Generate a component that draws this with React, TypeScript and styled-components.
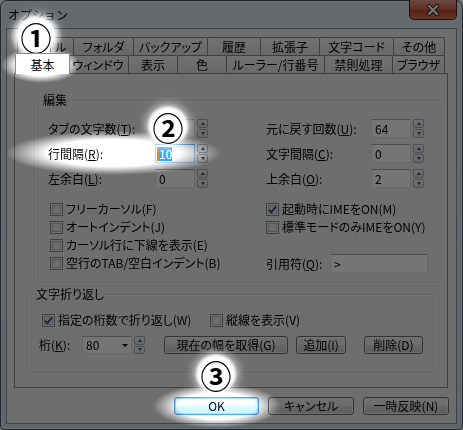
import styled, { createGlobalStyle } from "styled-components";

const GlobalStyle = createGlobalStyle`
  html, body { margin: 0; padding: 0; background: #ffffff; }
  body {
    font-family: "Noto Sans CJK JP", "Noto Sans", sans-serif;
    font-size: 12px;
    line-height: 18px;
    color: #000;
    font-feature-settings: "palt";
  }
  *, *::before, *::after { box-sizing: border-box; }
`;

const BACK_TABS: [string, number][] = [
  ["ファイル", 56],
  ["フォルダ", 60],
  ["バックアップ", 74],
  ["履歴", 53],
  ["拡張子", 59],
  ["文字コード", 74],
  ["その他", 51],
];

const FRONT_TABS: [string, number][] = [
  ["基本", 50],
  ["ウィンドウ", 61],
  ["表示", 49],
  ["色", 49],
  ["ルーラー/行番号", 98],
  ["禁則処理", 68],
  ["ブラウザ", 52],
];

// bright spots of the screenshot annotation
const HOLES = [
  { x: 36, y: 36, rx: 26, ry: 24 },
  { x: 41, y: 65, rx: 40, ry: 18 },
  { x: 113, y: 153, rx: 108, ry: 22 },
  { x: 168, y: 126, rx: 22, ry: 20 },
  { x: 217, y: 406, rx: 64, ry: 22 },
  { x: 216, y: 374, rx: 22, ry: 20 },
];

const holeMask = HOLES.map(
  (h) =>
    `radial-gradient(${h.rx}px ${h.ry}px at ${h.x}px ${h.y}px, transparent 62%, #000 100%)`
).join(", ");

const glowFill = HOLES.map(
  (h) =>
    `radial-gradient(${h.rx}px ${h.ry}px at ${h.x}px ${h.y}px, rgb(26,26,26) 55%, rgba(26,26,26,0) 100%)`
).join(", ");

const Stage = styled.div`
  position: relative;
  width: 463px;
  height: 430px;
  overflow: hidden;
`;

const Frame = styled.div`
  display: flex;
  flex-direction: column;
  width: 463px;
  height: 430px;
  padding: 0 6px 6px;
  border: 1px solid #4b5562;
  border-radius: 7px 7px 4px 4px;
  background: linear-gradient(#dde7f2, #d2dde9);
  box-shadow: inset 0 0 0 1px rgba(255, 255, 255, 0.55);
`;

const TitleBar = styled.div`
  display: flex;
  justify-content: space-between;
  align-items: flex-start;
  flex: none;
  height: 28px;
  padding-left: 1px;
`;

const Title = styled.span`
  margin-top: 5px;
  font-feature-settings: normal;
`;

const CloseButton = styled.div`
  display: flex;
  align-items: center;
  justify-content: center;
  width: 48px;
  height: 20px;
  margin: -1px -1px 0 0;
  border: 1px solid #47231c;
  border-top: none;
  border-radius: 0 0 5px 5px;
  background: linear-gradient(#eaa08e, #d46a53 45%, #c2452c 55%, #d87a58);
`;

const Client = styled.div`
  flex: 1;
  display: flex;
  flex-direction: column;
  padding: 8px 8px 0 7px;
  background: #f0f0f0;
  box-shadow: 0 0 0 1px #8893a0;
`;

const TabRow = styled.div`
  position: relative;
  display: flex;
  height: 18px;
  margin-left: 3px;
`;

const Tab = styled.div<{ $w: number; $active?: boolean }>`
  position: relative;
  flex: none;
  width: ${(p) => p.$w + (p.$active ? 5 : 1)}px;
  height: ${(p) => (p.$active ? 21 : 18)}px;
  margin: ${(p) => (p.$active ? "-2px -3px 0 -2px" : "0 -1px 0 0")};
  padding-top: ${(p) => (p.$active ? 2 : 0)}px;
  border: 1px solid #898c95;
  border-bottom: none;
  border-radius: 2px 2px 0 0;
  background: ${(p) =>
    p.$active ? "#ffffff" : "linear-gradient(#f7f7f7, #e4e4e4)"};
  z-index: ${(p) => (p.$active ? 2 : 0)};
  text-align: center;
  line-height: 17px;
  white-space: nowrap;
`;

const Panel = styled.div`
  display: flex;
  flex-direction: column;
  width: 434px;
  height: 315px;
  padding-top: 26px;
  border: 1px solid #898c95;
  background: #f0f0f0;
`;

const GroupBox = styled.div<{ $x: number; $w: number; $gap?: number }>`
  position: relative;
  width: ${(p) => p.$w}px;
  margin-left: ${(p) => p.$x}px;
  margin-top: ${(p) => p.$gap ?? 0}px;
  border: 1px solid #d5dfe5;
  border-radius: 3px;
  box-shadow: inset 1px 1px 0 #fff, 1px 1px 0 #fff;
`;

const Caption = styled.span`
  position: absolute;
  top: -10px;
  left: 6px;
  padding: 0 2px;
  background: #f0f0f0;
`;

const EditBody = styled.div`
  display: grid;
  grid-template-columns: 218px 1fr;
  padding: 18px 0 9px 13px;
`;

const Column = styled.div`
  display: flex;
  flex-direction: column;
`;

const SpinList = styled.div`
  display: flex;
  flex-direction: column;
  gap: 6px;
  margin-bottom: 12px;
`;

const Field = styled.div`
  display: flex;
  align-items: center;
  height: 19px;
`;

const FieldLabel = styled.span<{ $w: number }>`
  flex: none;
  width: ${(p) => p.$w}px;
  white-space: nowrap;
`;

const TextBox = styled.div<{ $w: number; $focus?: boolean; $h?: number }>`
  display: flex;
  align-items: center;
  flex: none;
  width: ${(p) => p.$w}px;
  height: ${(p) => p.$h ?? 19}px;
  padding: 0 3px;
  border: 1px solid;
  border-color: ${(p) =>
    p.$focus
      ? "#569de5 #8fc0ec #a6cdef #8fc0ec"
      : "#abadb3 #dbdfe6 #e3e9ef #e2e3ea"};
  background: #ffffff;
  font-feature-settings: normal;
`;

const Selection = styled.span`
  background: #3399ff;
  color: #fff;
  line-height: 14px;
  box-shadow: -2px 0 0 #c47a30;
`;

const Spinner = styled.div<{ $h?: number }>`
  display: flex;
  flex-direction: column;
  gap: 1px;
  flex: none;
  width: 11px;
  height: ${(p) => p.$h ?? 19}px;
  margin-left: 2px;
`;

const SpinHalf = styled.div`
  flex: 1;
  display: flex;
  align-items: center;
  justify-content: center;
  border: 1px solid #a7aeb8;
  border-radius: 2px;
  background: linear-gradient(#f6f6f6, #dedede);
`;

const Arrow = styled.span<{ $down?: boolean; $size?: number; $color?: string }>`
  width: 0;
  height: 0;
  border-left: ${(p) => p.$size ?? 2.5}px solid transparent;
  border-right: ${(p) => p.$size ?? 2.5}px solid transparent;
  ${(p) =>
    p.$down
      ? `border-top: ${(p.$size ?? 2.5) + 0.5}px solid ${p.$color ?? "#44577c"};`
      : `border-bottom: ${(p.$size ?? 2.5) + 0.5}px solid ${p.$color ?? "#44577c"};`}
`;

const CheckList = styled.div<{ $indent?: number }>`
  display: flex;
  flex-direction: column;
  padding-left: ${(p) => p.$indent ?? 0}px;
`;

const CheckItem = styled.label<{ $w?: number }>`
  display: flex;
  align-items: center;
  height: 18px;
  width: ${(p) => (p.$w ? `${p.$w}px` : "auto")};
  white-space: nowrap;
`;

const Box = styled.span`
  display: inline-flex;
  align-items: center;
  justify-content: center;
  flex: none;
  width: 13px;
  height: 13px;
  margin-right: 3px;
  border: 1px solid #8e8f8f;
  background: linear-gradient(135deg, #dcdee2, #fbfbfb);
  box-shadow: inset 0 0 0 1px #f4f4f4, inset 0 0 0 2px #b8bcc2;
`;

const Spacer = styled.div`
  height: 18px;
`;

const WrapBody = styled.div`
  display: flex;
  flex-direction: column;
  gap: 7px;
  padding: 16px 0 18px 11px;
`;

const WrapRow = styled.div<{ $indent?: number }>`
  display: flex;
  align-items: center;
  height: 18px;
  padding-left: ${(p) => p.$indent ?? 0}px;
`;

const ComboValue = styled.span`
  flex: 1;
`;

const Button = styled.button<{ $w: number; $gap?: number; $default?: boolean }>`
  flex: none;
  width: ${(p) => p.$w}px;
  height: 18px;
  margin-left: ${(p) => p.$gap ?? 0}px;
  padding: 0;
  border: 1px solid ${(p) => (p.$default ? "#3a9be8" : "#707070")};
  border-radius: 3px;
  background: ${(p) =>
    p.$default
      ? "linear-gradient(#eaf5fd, #dcedfb 50%, #c6e2f7 50%, #b9dbf4)"
      : "linear-gradient(#f2f2f2, #ebebeb 50%, #dddddd 50%, #cfcfcf)"};
  box-shadow: inset 0 0 0 1px
    ${(p) => (p.$default ? "#8fd0f7" : "rgba(255,255,255,0.7)")};
  font: inherit;
  line-height: 16px;
  color: #000;
  font-feature-settings: "palt";
`;

const ButtonBar = styled.div`
  display: flex;
  justify-content: flex-end;
  gap: 9px;
  margin: 9px -1px 0 0;
`;

const Glow = styled.div`
  position: absolute;
  inset: 0;
  pointer-events: none;
  background: ${glowFill};
  mix-blend-mode: color-dodge;
`;

const Shade = styled.div`
  position: absolute;
  inset: 0;
  pointer-events: none;
  background: rgba(0, 0, 0, 0.54);
  -webkit-mask-image: ${holeMask};
  -webkit-mask-composite: source-in;
  mask-image: ${holeMask};
  mask-composite: intersect;
`;

const Marker = styled.span<{ $x: number; $y: number }>`
  position: absolute;
  left: ${(p) => p.$x - 15}px;
  top: ${(p) => p.$y - 15}px;
  display: flex;
  align-items: center;
  justify-content: center;
  width: 30px;
  height: 30px;
  border-radius: 50%;
  background: #fff;
  box-shadow: 0 0 3px 4px #fff, 0 0 10px 7px rgba(255, 255, 255, 0.7);
  font-size: 31px;
  font-weight: 700;
  line-height: 1;
  font-feature-settings: normal;
`;

function Spin({ h }: { h?: number }) {
  return (
    <Spinner $h={h}>
      <SpinHalf>
        <Arrow />
      </SpinHalf>
      <SpinHalf>
        <Arrow $down />
      </SpinHalf>
    </Spinner>
  );
}

function Check({ label, checked, w }: { label: string; checked?: boolean; w?: number }) {
  return (
    <CheckItem $w={w}>
      <Box>
        {checked && (
          <svg width="9" height="9" viewBox="0 0 9 9">
            <path d="M1 4.6 L3.4 7.2 L8 1.4" fill="none" stroke="#3b4e7c" strokeWidth="1.9" />
          </svg>
        )}
      </Box>
      {label}
    </CheckItem>
  );
}

function NumField({
  label,
  k,
  value,
  w,
  selected,
}: {
  label: string;
  k: string;
  value: string;
  w: number;
  selected?: boolean;
}) {
  return (
    <Field>
      <FieldLabel $w={w}>
        {label}(<u>{k}</u>):
      </FieldLabel>
      <TextBox $w={40} $focus={selected}>
        {selected ? <Selection>{value}</Selection> : value}
      </TextBox>
      <Spin />
    </Field>
  );
}

export default function App() {
  return (
    <>
      <GlobalStyle />
      <Stage>
        <Frame>
          <TitleBar>
            <Title>オプション</Title>
            <CloseButton>
              <svg width="14" height="12" viewBox="0 0 14 12">
                <path d="M3 2 L11 10 M11 2 L3 10" stroke="#3a2b28" strokeWidth="4" strokeLinecap="round" />
                <path d="M3 2 L11 10 M11 2 L3 10" stroke="#ffffff" strokeWidth="2.2" strokeLinecap="round" />
              </svg>
            </CloseButton>
          </TitleBar>
          <Client>
            <TabRow>
              {BACK_TABS.map(([name, w]) => (
                <Tab key={name} $w={w}>
                  {name}
                </Tab>
              ))}
            </TabRow>
            <TabRow>
              {FRONT_TABS.map(([name, w], i) => (
                <Tab key={name} $w={w} $active={i === 0}>
                  {name}
                </Tab>
              ))}
            </TabRow>
            <Panel>
              <GroupBox $x={19} $w={408}>
                <Caption>編集</Caption>
                <EditBody>
                  <Column>
                    <SpinList>
                      <NumField label="タブの文字数" k="T" value="4" w={107} />
                      <NumField label="行間隔" k="R" value="10" w={107} selected />
                      <NumField label="左余白" k="L" value="0" w={107} />
                    </SpinList>
                    <CheckList $indent={2}>
                      <Check label="フリーカーソル(F)" />
                      <Check label="オートインデント(J)" />
                      <Check label="カーソル行に下線を表示(E)" />
                      <Check label="空行のTAB/空白インデント(B)" />
                    </CheckList>
                  </Column>
                  <Column>
                    <SpinList>
                      <NumField label="元に戻す回数" k="U" value="64" w={105} />
                      <NumField label="文字間隔" k="C" value="0" w={105} />
                      <NumField label="上余白" k="O" value="2" w={105} />
                    </SpinList>
                    <CheckList>
                      <Check label="起動時にIMEをON(M)" checked />
                      <Check label="標準モードのみIMEをON(Y)" />
                      <Spacer />
                      <Field>
                        <FieldLabel $w={64}>
                          引用符(<u>Q</u>):
                        </FieldLabel>
                        <TextBox $w={98}>&gt;</TextBox>
                      </Field>
                    </CheckList>
                  </Column>
                </EditBody>
              </GroupBox>
              <GroupBox $x={12} $w={407} $gap={11}>
                <Caption>文字折り返し</Caption>
                <WrapBody>
                  <WrapRow $indent={3}>
                    <Check label="指定の桁数で折り返し(W)" checked w={168} />
                    <Check label="縦線を表示(V)" />
                  </WrapRow>
                  <WrapRow>
                    <FieldLabel $w={43}>
                      桁(<u>K</u>):
                    </FieldLabel>
                    <TextBox $w={50} $h={18}>
                      <ComboValue>80</ComboValue>
                      <Arrow $down $size={3} $color="#000" />
                    </TextBox>
                    <Spin h={18} />
                    <Button $w={124} $gap={19}>
                      現在の幅を取得(G)
                    </Button>
                    <Button $w={50} $gap={8}>
                      追加(I)
                    </Button>
                    <Button $w={59} $gap={18}>
                      削除(D)
                    </Button>
                  </WrapRow>
                </WrapBody>
              </GroupBox>
            </Panel>
            <ButtonBar>
              <Button $w={85} $default>
                OK
              </Button>
              <Button $w={86}>キャンセル</Button>
              <Button $w={86}>一時反映(N)</Button>
            </ButtonBar>
          </Client>
        </Frame>
        <Glow />
        <Shade />
        <Marker $x={36} $y={36}>①</Marker>
        <Marker $x={168} $y={126}>②</Marker>
        <Marker $x={216} $y={374}>③</Marker>
      </Stage>
    </>
  );
}
